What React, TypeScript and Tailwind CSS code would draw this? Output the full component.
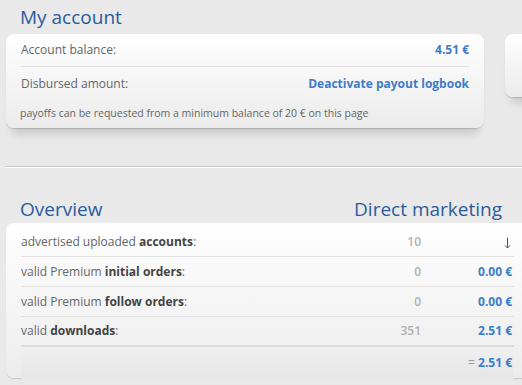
import React from "react";

const font = { fontFamily: '"Open Sans", "DejaVu Sans", sans-serif' };

function Row({ label, bold, count, value, last }: { label: string; bold: string; count: string; value: React.ReactNode; last?: boolean }) {
  return (
    <div className={`flex items-center h-[30px] ml-[15px] ${last ? "border-b-2 border-[#dcdcdc]" : "border-b border-[#e2e2e2]"}`}>
      <div className="flex-1 text-[12px] text-[#666]">
        {label}
        <span className="font-bold text-[#444]">{bold}</span>:
      </div>
      <div className="w-[60px] text-right text-[12px] text-[#b0b0b0] font-semibold">{count}</div>
      <div className="w-[93px] pr-[2px] flex justify-end text-[12px] font-bold text-[#3d7ccc]">{value}</div>
    </div>
  );
}

function DownArrow() {
  return (
    <svg width="7" height="12" viewBox="0 0 7 12" className="mr-[1px] mt-[2px]">
      <path d="M3.5 0.5 V11" stroke="#555" strokeWidth="1" fill="none" />
      <path d="M1 8.5 L3.5 11 L6 8.5" stroke="#555" strokeWidth="1" fill="none" />
    </svg>
  );
}

export default function App() {
  return (
    <div className="w-[522px] h-[385px] overflow-hidden bg-[#e9e9e9]" style={font}>
      <div className="pt-[4px] pl-[20px] h-[34px] text-[19px] leading-[26px] text-[#2c5c9c]">My account</div>
      <div className="flex gap-[21px] pl-[6px]">
        <div className="w-[478px] h-[94px] shrink-0 rounded-[8px] bg-gradient-to-b from-white to-[#ebebeb] shadow-[0_1px_1px_rgba(0,0,0,0.15),0_12px_10px_-6px_rgba(0,0,0,0.14)] px-[15px]">
          <div className="flex items-center justify-between h-[33px] border-b border-[#e0e0e0] text-[12px]">
            <span className="text-[#666]">Account balance:</span>
            <span className="font-bold text-[#3d7ccc]">4.51 €</span>
          </div>
          <div className="flex items-center justify-between h-[34px] text-[12px]">
            <span className="text-[#666]">Disbursed amount:</span>
            <span className="font-bold text-[#3d7ccc]">Deactivate payout logbook</span>
          </div>
          <div className="pt-[1px] text-[10.5px] leading-[22px] text-[#666] -ml-[1px]">payoffs can be requested from a minimum balance of 20 € on this page</div>
        </div>
        <div className="w-[100px] h-[63px] shrink-0 rounded-[8px] bg-gradient-to-b from-white to-[#ebebeb] shadow-[0_1px_1px_rgba(0,0,0,0.15),0_12px_10px_-6px_rgba(0,0,0,0.14)]" />
      </div>
      <div className="ml-[5px] mt-[38px] border-t border-[#c9c9c9] border-b border-b-white h-0" />
      <div className="flex items-end justify-between pl-[20px] pr-[20px] h-[55px] pb-[1px] text-[19px] leading-[26px] text-[#2c5c9c]">
        <span>Overview</span>
        <span>Direct marketing</span>
      </div>
      <div className="ml-[6px] w-[540px] h-[155px] rounded-[8px] bg-gradient-to-b from-white to-[#ececec] shadow-[0_1px_1px_rgba(0,0,0,0.15)]">
        <div className="w-[508px] pt-[4px]">
          <Row label="advertised uploaded " bold="accounts" count="10" value={<DownArrow />} />
          <Row label="valid Premium " bold="initial orders" count="0" value="0.00 €" />
          <Row label="valid Premium " bold="follow orders" count="0" value="0.00 €" />
          <Row label="valid " bold="downloads" count="351" value="2.51 €" last />
          <div className="flex items-center h-[32px] ml-[15px] bg-gradient-to-b from-[#f0f0f0] to-[#e6e6e6]">
            <div className="flex-1" />
            <div className="w-[93px] pr-[2px] text-right text-[12px] font-bold text-[#3d7ccc]"><span className="text-[#999] font-normal">= </span>2.51 €</div>
          </div>
        </div>
      </div>
    </div>
  );
}
